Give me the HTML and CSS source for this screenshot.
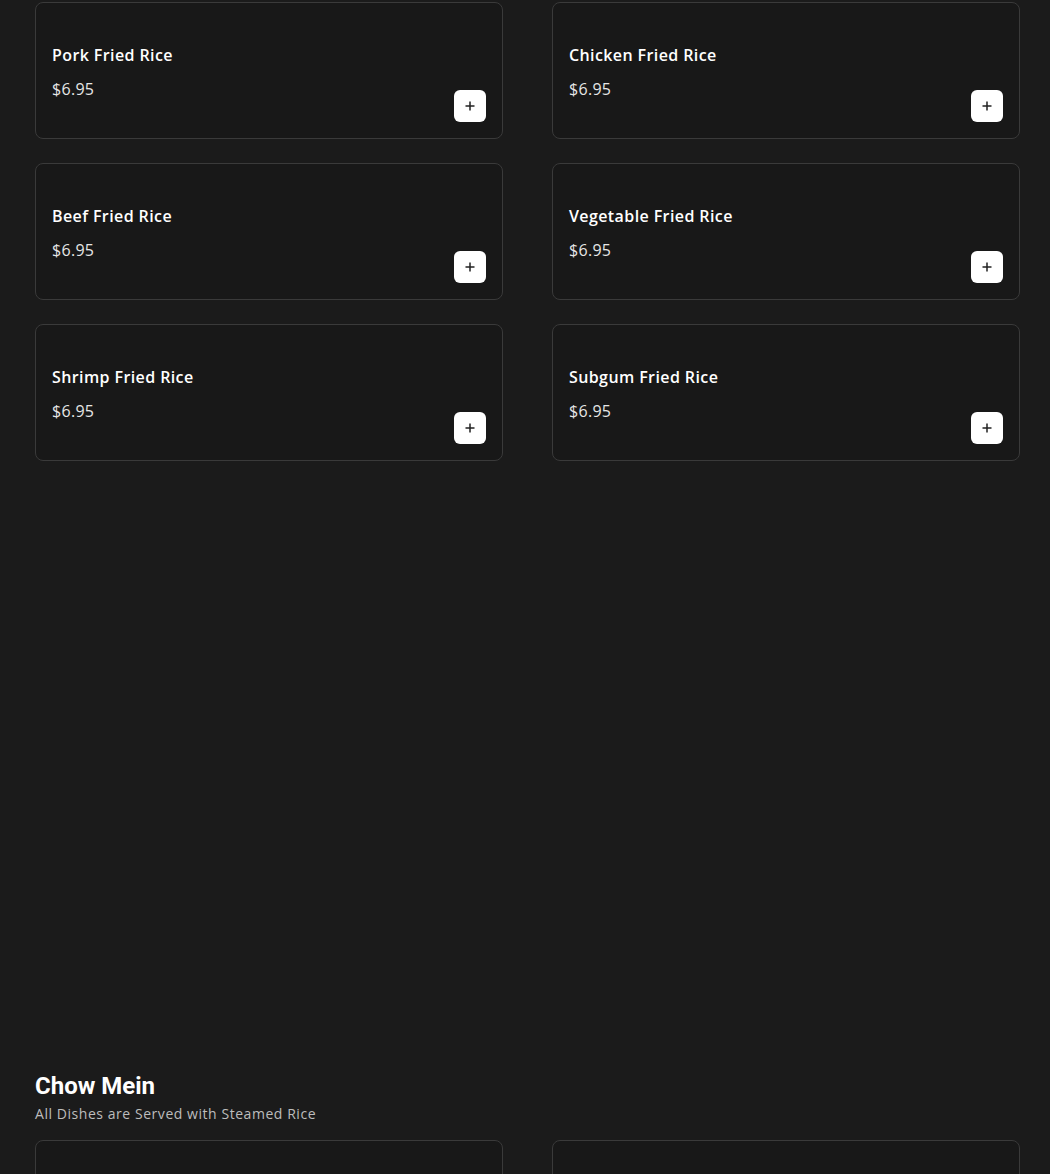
FILE: index.html
```html
<!DOCTYPE html>
<html lang="en">
<head>
<meta charset="UTF-8">
<meta name="viewport" content="width=device-width, initial-scale=1.0">
<title>Menu</title>
<link rel="stylesheet" href="styles.css">
</head>
<body>
<div class="menu">
  <div class="section">
    <div class="grid">
      <div class="card">
        <div class="info"><div class="name">Pork Fried Rice</div><div class="price">$6.95</div></div>
        <button class="add"><svg width="12" height="12" viewBox="0 0 12 12"><path d="M6 1.5v9M1.5 6h9" stroke="#222" stroke-width="1.5"/></svg></button>
      </div>
      <div class="card">
        <div class="info"><div class="name">Chicken Fried Rice</div><div class="price">$6.95</div></div>
        <button class="add"><svg width="12" height="12" viewBox="0 0 12 12"><path d="M6 1.5v9M1.5 6h9" stroke="#222" stroke-width="1.5"/></svg></button>
      </div>
      <div class="card">
        <div class="info"><div class="name">Beef Fried Rice</div><div class="price">$6.95</div></div>
        <button class="add"><svg width="12" height="12" viewBox="0 0 12 12"><path d="M6 1.5v9M1.5 6h9" stroke="#222" stroke-width="1.5"/></svg></button>
      </div>
      <div class="card">
        <div class="info"><div class="name">Vegetable Fried Rice</div><div class="price">$6.95</div></div>
        <button class="add"><svg width="12" height="12" viewBox="0 0 12 12"><path d="M6 1.5v9M1.5 6h9" stroke="#222" stroke-width="1.5"/></svg></button>
      </div>
      <div class="card">
        <div class="info"><div class="name">Shrimp Fried Rice</div><div class="price">$6.95</div></div>
        <button class="add"><svg width="12" height="12" viewBox="0 0 12 12"><path d="M6 1.5v9M1.5 6h9" stroke="#222" stroke-width="1.5"/></svg></button>
      </div>
      <div class="card">
        <div class="info"><div class="name">Subgum Fried Rice</div><div class="price">$6.95</div></div>
        <button class="add"><svg width="12" height="12" viewBox="0 0 12 12"><path d="M6 1.5v9M1.5 6h9" stroke="#222" stroke-width="1.5"/></svg></button>
      </div>
    </div>
  </div>

  <div class="section next">
    <h2 class="title">Chow Mein</h2>
    <p class="sub">All Dishes are Served with Steamed Rice</p>
    <div class="grid">
      <div class="card"></div>
      <div class="card"></div>
    </div>
  </div>
</div>
</body>
</html>
```

FILE: styles.css
```css
body {
    margin: 0;
    background-color: #1b1b1b;
    color: #fff;
    font-family: "Open Sans", Arial, sans-serif;
}

.menu {
    padding: 2px 29px 0 35px;
}

.grid {
    display: grid;
    grid-template-columns: 468px 468px;
    column-gap: 49px;
    row-gap: 24px;
}

.card {
    box-sizing: border-box;
    height: 137px;
    background-color: #181818;
    border: 1px solid #3a3a3a;
    border-radius: 8px;
    padding: 16px;
    display: flex;
    justify-content: space-between;
    align-items: flex-end;
}

.info {
    align-self: flex-start;
    padding-top: 24px;
}

.name {
    font-size: 16px;
    font-weight: 600;
    line-height: 24px;
    letter-spacing: 0.4px;
}

.price {
    margin-top: 10px;
    font-size: 16px;
    line-height: 24px;
    letter-spacing: 0.3px;
    color: #e6e6e6;
}

.add {
    width: 32px;
    height: 32px;
    border: none;
    border-radius: 6px;
    background-color: #fff;
    display: flex;
    align-items: center;
    justify-content: center;
    padding: 0;
    cursor: pointer;
}

.next {
    margin-top: 609px;
}

.title {
    margin: 0;
    font-family: Roboto, Arial, sans-serif;
    font-size: 24px;
    font-weight: 700;
    line-height: 32px;
}

.sub {
    margin: 2px 0 16px;
    font-size: 14px;
    line-height: 20px;
    letter-spacing: 0.55px;
    color: #bdbdbd;
}
```
